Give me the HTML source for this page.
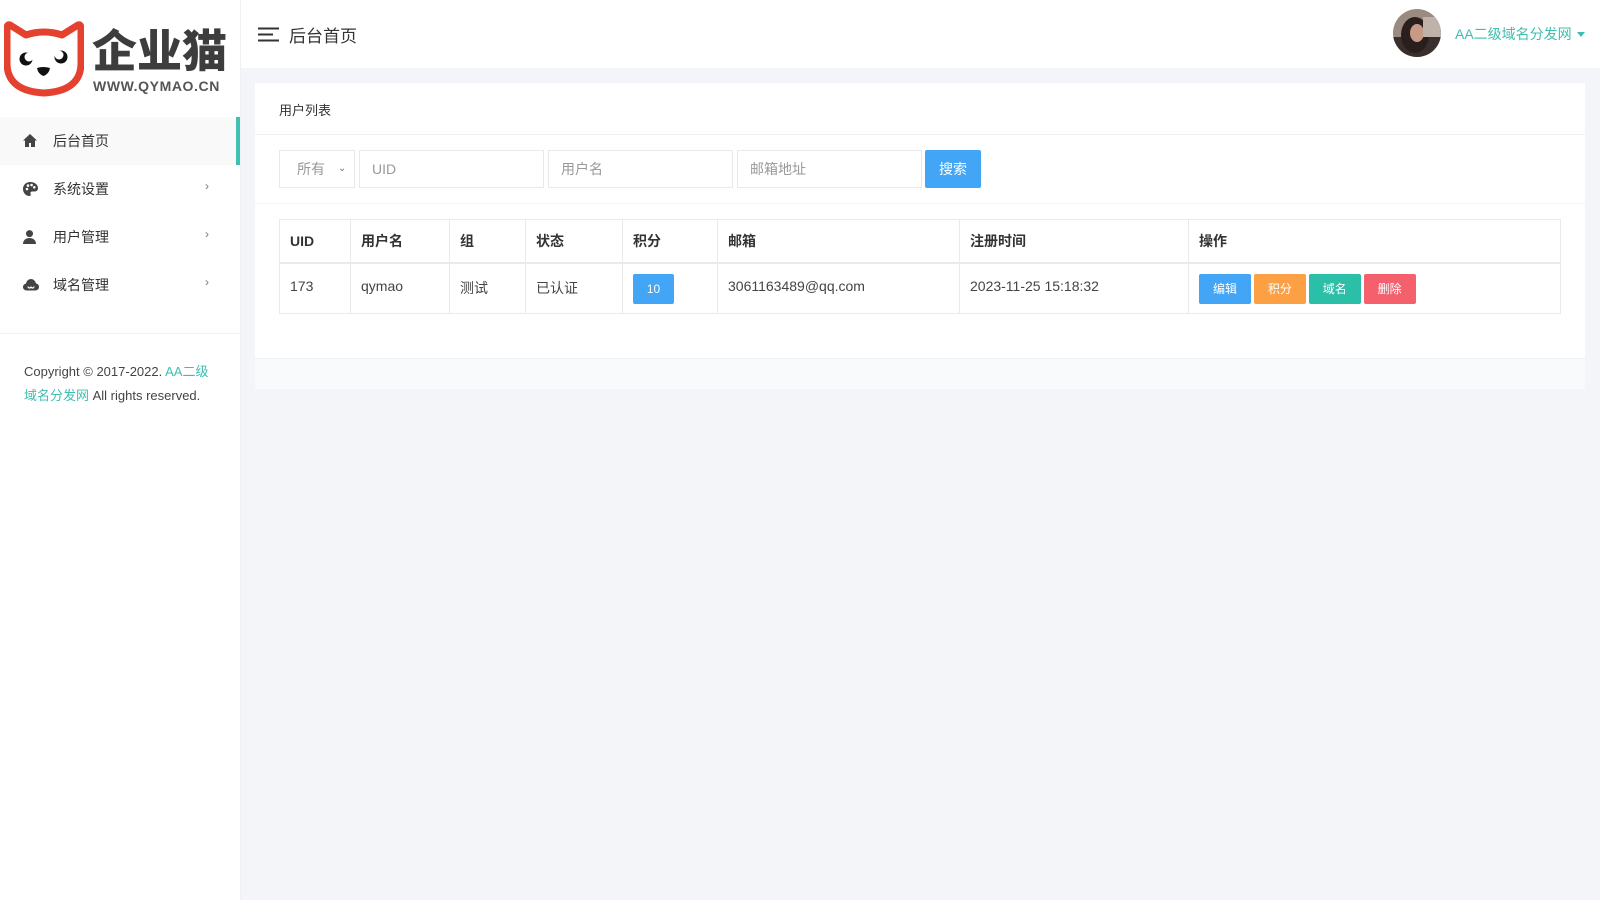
<!DOCTYPE html>
<html><head><meta charset="utf-8"><style>
*{margin:0;padding:0;box-sizing:border-box}
body{width:1600px;height:900px;background:#f3f5f8;font-family:"Liberation Sans","Noto Sans CJK SC",sans-serif;color:#444;position:relative;overflow:hidden;font-size:14px}
.side{position:absolute;left:0;top:0;width:241px;height:900px;background:#fff;border-right:1px solid #eef0f3}
.logo-t{position:absolute;left:92px;top:22px;font-size:45px;font-weight:900;color:#3d3d3d;line-height:52px;font-family:"WenQuanYi Zen Hei","Noto Sans CJK SC",sans-serif}
.logo-u{position:absolute;left:93px;top:78px;font-size:14px;font-weight:bold;color:#555;letter-spacing:0.6px}
.menu{position:absolute;top:117px;left:0;width:240px}
.mi{height:48px;position:relative;display:flex;align-items:center;padding-left:53px;font-size:14px;color:#333}
.mi.act{background:#f9f9f9;border-right:4px solid #3ec1b0}
.mi svg{position:absolute;left:23px;top:17px}
.mi .ch{position:absolute;left:205px;top:14px;color:#777;font-size:12px}
.hr{position:absolute;top:333px;left:0;width:240px;height:1px;background:#f1f2f4}
.copy{position:absolute;left:24px;top:360px;font-size:13px;line-height:24px;color:#444;width:188px}
.teal{color:#3ebfae}
.top{position:absolute;left:241px;top:0;right:0;height:68px;background:#fff}
.card{position:absolute;left:255px;top:83px;width:1330px;height:306px;background:#fff}
.in{position:absolute;top:150px;height:38px;border:1px solid #e8e9ec;background:#fff;font-size:14px;color:#999;padding-left:12px;line-height:36px}
table{position:absolute;left:279px;top:219px;width:1282px;border-collapse:collapse;font-size:14px}
td,th{border:1px solid #e9eaec;text-align:left;padding:0 10px;color:#444}
th{height:43px;font-weight:bold;color:#333;border-bottom:2px solid #e9eaec}
td{height:51px;vertical-align:top;padding-top:14px}
.b{display:inline-block;width:52px;height:30px;line-height:30px;text-align:center;color:#fff;font-size:12px;border-radius:2px;margin-right:-1px}
</style></head><body>
<div class="side">
<svg style="position:absolute;left:4px;top:21px" width="80" height="76" viewBox="0 0 80 76">
<path d="M6 4 L22 14 Q40 8 58 14 L74 4 Q77 3 77 8 L77 42 Q77 70 40 72 Q3 70 3 42 L3 8 Q3 3 6 4Z" fill="#fff" stroke="#e5412f" stroke-width="7" stroke-linejoin="round"/>
<circle cx="22" cy="38" r="6.5" fill="#111"/><circle cx="25" cy="36" r="4.5" fill="#fff"/>
<circle cx="57" cy="36" r="6.5" fill="#111"/><circle cx="55" cy="34" r="4.5" fill="#fff"/>
<path d="M33 47 Q39 45 46 47 Q45 53 39.5 55 Q34 53 33 47Z" fill="#111"/>
</svg>
<div class="logo-t">企业猫</div>
<div class="logo-u">WWW.QYMAO.CN</div>
<div class="menu">
<div class="mi act"><svg width="14" height="13" viewBox="0 0 14 13"><path d="M7 0L0 6.5h2V13h4V9h2v4h4V6.5h2z" fill="#444"/></svg>后台首页</div>
<div class="mi"><svg width="15" height="14" viewBox="0 0 15 14"><path d="M7.5 0C3 0 0 3 0 7c0 4 3 7 6.5 7 1.5 0 1.5-1.5 1-2.5s.5-2 2-2h2C14 9.5 15 8 15 6 15 2.5 11.5 0 7.5 0z" fill="#444"/><circle cx="4" cy="7" r="1.3" fill="#fff"/><circle cx="5" cy="3.6" r="1.3" fill="#fff"/><circle cx="8.6" cy="3" r="1.3" fill="#fff"/><circle cx="11.3" cy="5.3" r="1.3" fill="#fff"/></svg>系统设置<span class="ch">›</span></div>
<div class="mi"><svg width="13" height="14" viewBox="0 0 13 14"><circle cx="6.5" cy="3.6" r="3.5" fill="#444"/><path d="M0 14c0-4 3-6 6.5-6S13 10 13 14z" fill="#444"/></svg>用户管理<span class="ch">›</span></div>
<div class="mi"><svg width="16" height="13" viewBox="0 0 16 13"><path d="M4 12.5C1.5 12.5 0 11 0 9s1.5-3.3 3-3.3C3.3 3 5.5 1 8 1s4.5 2 5 4.5C15 5.8 16 7.3 16 9c0 2-1.5 3.5-4 3.5z" fill="#444"/><path d="M5 8.5a1.5 1.5 0 1 0 3 0a1.5 1.5 0 1 0 3 0" stroke="#fff" stroke-width="1.2" fill="none"/></svg>域名管理<span class="ch">›</span></div>
</div>
<div class="hr"></div>
<div class="copy">Copyright © 2017-2022. <span class="teal">AA二级域名分发网</span> All rights reserved.</div>
</div>
<div class="top">
<svg style="position:absolute;left:17px;top:27px" width="21" height="15"><path d="M0 1.5h21M0 7.5h15M0 13.5h21" stroke="#333" stroke-width="2"/></svg>
<div style="position:absolute;left:48px;top:22px;font-size:17px;color:#333">后台首页</div>
<svg style="position:absolute;left:1152px;top:9px" width="48" height="48"><defs><clipPath id="c"><circle cx="24" cy="24" r="24"/></clipPath></defs><g clip-path="url(#c)"><rect width="48" height="48" fill="#9a8a80"/><rect y="28" width="48" height="20" fill="#3a2f2c"/><ellipse cx="22" cy="26" rx="14" ry="18" fill="#2a1f1c"/><ellipse cx="24" cy="24" rx="7" ry="9" fill="#c79a85"/><rect x="30" y="8" width="18" height="20" fill="#bfb2a8"/></g></svg>
<div style="position:absolute;left:1214px;top:24px;font-size:14px;color:#3ebfae">AA二级域名分发网</div>
<div style="position:absolute;left:1336px;top:32px;border:4px solid transparent;border-top:5px solid #3ebfae"></div>
</div>
<div class="card">
<div style="position:absolute;left:24px;top:17px;font-size:13px;color:#333">用户列表</div>
<div style="position:absolute;left:0;top:51px;width:100%;height:1px;background:#f1f2f4"></div>
<div style="position:absolute;left:0;top:120px;width:100%;height:1px;background:#f5f6f8"></div>
<div style="position:absolute;left:0;top:275px;width:100%;height:31px;background:#f9fafc;border-top:1px solid #eef0f3"></div>
</div>
<div class="in" style="left:279px;width:76px;padding-left:17px">所有<span style="position:absolute;left:58px;top:0;font-size:10px;color:#777">⌄</span></div>
<div class="in" style="left:359px;width:185px">UID</div>
<div class="in" style="left:548px;width:185px">用户名</div>
<div class="in" style="left:737px;width:185px">邮箱地址</div>
<div style="position:absolute;left:925px;top:150px;width:56px;height:38px;background:#42a5f5;color:#fff;text-align:center;line-height:38px;font-size:14px;border-radius:2px">搜索</div>
<table>
<tr><th style="width:71px">UID</th><th style="width:99px">用户名</th><th style="width:76px">组</th><th style="width:97px">状态</th><th style="width:95px">积分</th><th style="width:242px">邮箱</th><th style="width:229px">注册时间</th><th>操作</th></tr>
<tr><td>173</td><td>qymao</td><td>测试</td><td>已认证</td><td style="padding-top:10px"><span class="b" style="background:#42a5f5;width:41px;height:30px">10</span></td><td>3061163489@qq.com</td><td>2023-11-25 15:18:32</td><td style="padding-top:10px"><span class="b" style="background:#42a5f5">编辑</span> <span class="b" style="background:#fba045">积分</span> <span class="b" style="background:#2bbfa8">域名</span> <span class="b" style="background:#f4606c">删除</span></td></tr>
</table>
</body></html>
